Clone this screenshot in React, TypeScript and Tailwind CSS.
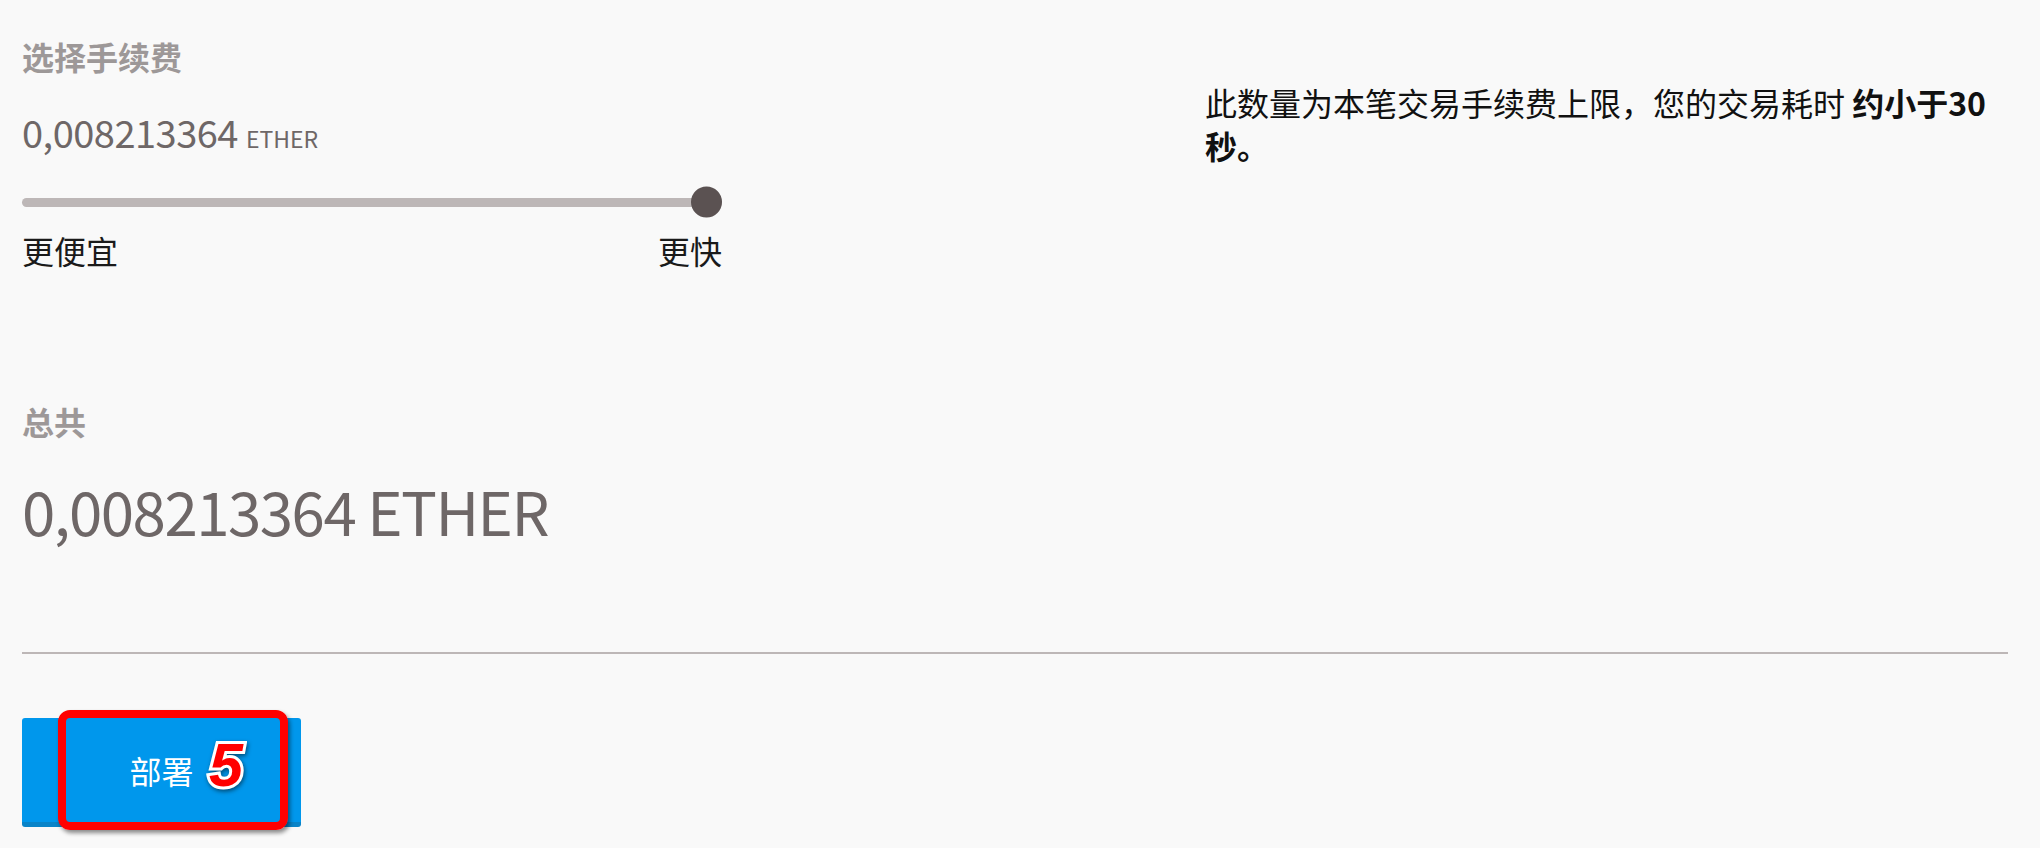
import React from 'react';

const FEE = '0,008213364';

function FeeSlider() {
  return (
    <div className="relative flex h-[32px] w-[700px] items-center">
      <div className="h-[9px] w-full rounded-full bg-[#bdb7b7]" />
      <div className="absolute right-0 top-1/2 h-[31px] w-[31px] -translate-y-1/2 rounded-full bg-[#5b5252]" />
    </div>
  );
}

function DeployButton() {
  return (
    <div className="relative mt-[64px] flex h-[109px] w-[279px] items-center justify-center rounded-[3px] border-b-[5px] border-[#0a84c8] bg-[#0097ec] text-[32px] leading-[40px] text-white">
      <span>部署</span>
      {/* annotation overlay */}
      <div className="absolute left-[36px] top-[-8px] h-[120px] w-[230px] rounded-[12px] border-[8px] border-[#ff0000] shadow-[2px_3px_4px_rgba(0,0,0,0.45)]" />
      <span className="absolute left-[187px] top-[17px] font-['Liberation_Sans',Arial,sans-serif] text-[61px] font-black italic leading-[61px] text-[#ff0000] [-webkit-text-stroke:6px_#ffffff] [paint-order:stroke_fill] [filter:drop-shadow(1px_2px_2px_rgba(0,0,0,0.5))]">
        5
      </span>
    </div>
  );
}

export default function App() {
  return (
    <div className="h-[848px] w-[2040px] overflow-hidden bg-[#f9f9f9] px-[22px] pt-[36px] font-['Noto_Sans_CJK_SC','Noto_Sans',sans-serif]">
      <div className="flex items-start">
        <div className="w-[700px]">
          <h3 className="text-[32px] font-bold leading-[40px] text-[#9d9898]">选择手续费</h3>
          <div className="mt-[32px] text-[38px] leading-[48px] tracking-[-0.5px] text-[#6e6767]">
            {FEE} <span className="text-[23px] tracking-normal">ETHER</span>
          </div>
          <div className="mt-[24px]">
            <FeeSlider />
          </div>
          <div className="mt-[12px] flex w-[700px] justify-between text-[32px] leading-[40px] text-[#1a1a1a]">
            <span>更便宜</span>
            <span>更快</span>
          </div>
        </div>
        <p className="ml-[483px] mt-[45px] w-[792px] text-[32px] leading-[43px] text-[#111111]">
          此数量为本笔交易手续费上限，您的交易耗时 <strong className="font-bold">约小于30秒。</strong>
        </p>
      </div>

      <h3 className="mt-[131px] text-[32px] font-bold leading-[40px] text-[#9d9898]">总共</h3>
      <div className="mt-[31px] text-[60px] leading-[76px] tracking-[-1.5px] text-[#6e6767]">{FEE} ETHER</div>

      <div className="mt-[104px] h-[2px] w-[1986px] bg-[#bdb7b7]" />

      <DeployButton />
    </div>
  );
}
